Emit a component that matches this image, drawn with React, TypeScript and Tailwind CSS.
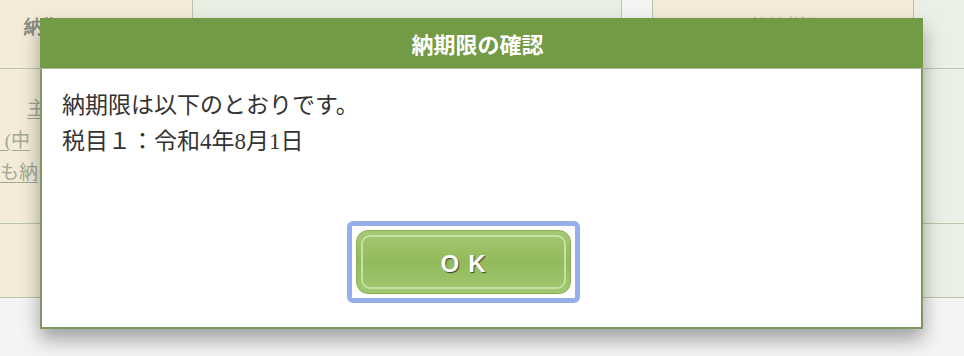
const serifJa = { fontFamily: '"Liberation Serif", "Noto Sans CJK JP", serif' };

const BackgroundTable = () => {
  return (
    <div className="grid grid-cols-[192px_428px_30px_260px_1fr] grid-rows-[68px_154px_73px] gap-px bg-[#b9c4aa] border-b border-[#b9c4aa]">
      {/* row 1 */}
      <div className="bg-[#f4ebd8] pl-[24px] pt-[12px] text-[19px] font-bold text-[#8c8c86]">
        納期
      </div>
      <div className="bg-[#e9efe3]" />
      <div className="bg-[#f4f5f2]" />
      <div className="bg-[#f4ebd8] flex items-start justify-center pt-[12px] text-[16px] font-bold text-[#c9c2b2]">
        納付税額
      </div>
      <div className="bg-[#eaf0e6]" />

      {/* row 2 */}
      <div
        className="bg-[#f4ebd8] flex flex-col items-start pt-[24px] text-[19px] leading-[32px] text-[#a3a994]"
        style={serifJa}
      >
        <span className="ml-[27px] underline decoration-[#a3a994] underline-offset-[3px]">主</span>
        <span className="underline decoration-[#a3a994] underline-offset-[3px]">&nbsp;(中</span>
        <span className="underline decoration-[#a3a994] underline-offset-[3px]">も納</span>
      </div>
      <div className="bg-[#e9efe3]" />
      <div className="bg-[#f4f5f2]" />
      <div className="bg-[#f4ebd8]" />
      <div className="bg-[#eaf0e6]" />

      {/* row 3 */}
      <div className="bg-[#f4ebd8] flex items-center pl-[32px] text-[15px] text-[#b5b3a8]">
        〈
      </div>
      <div className="bg-[#e9efe3]" />
      <div className="bg-[#f4f5f2]" />
      <div className="bg-[#f4ebd8]" />
      <div className="bg-[#eaf0e6]" />
    </div>
  );
};

const OkButton = () => {
  return (
    <div className="rounded-[6px] border-[5px] border-[#94afe9] p-[4px] bg-white">
      <button
        type="button"
        className="block w-[215px] h-[64px] rounded-[12px] border border-[#89b054] bg-gradient-to-b from-[#a6c972] via-[#92ba5a] to-[#a2c871] p-[4px]"
      >
        <span className="flex h-full w-full items-center justify-center rounded-[9px] border-2 border-[#c7e0a3]">
          <span
            className="pl-[9px] pt-[4px] text-[24px] font-bold tracking-[9px] text-white [text-shadow:1px_1px_1px_#3b4630]"
            style={{ fontFamily: '"Liberation Sans", Arial, sans-serif' }}
          >
            OK
          </span>
        </span>
      </button>
    </div>
  );
};

export default function App() {
  return (
    <div className="relative h-[356px] w-full overflow-hidden bg-[#f4f4f4]">
      <BackgroundTable />

      {/* modal dialog */}
      <div className="absolute left-[40px] top-[18px] w-[883px] shadow-[0_10px_18px_rgba(0,0,0,0.35)]">
        <div
          className="flex h-[51px] items-center justify-center border-b border-[#a9b99a] bg-[#739a44] text-[22px] font-bold text-white"
          style={{ fontFamily: '"Noto Sans CJK JP", sans-serif' }}
        >
          <span className="pr-[8px]">納期限の確認</span>
        </div>
        <div className="border-x-2 border-b-2 border-[#7d9960] bg-white pt-[19px] pb-[24px]">
          <div className="pl-[20px] text-[23px] leading-[36px] text-[#333333]" style={serifJa}>
            <p>納期限は以下のとおりです。</p>
            <p>税目１：令和4年8月1日</p>
          </div>
          <div className="mt-[61px] flex justify-center pr-[37px]">
            <OkButton />
          </div>
        </div>
      </div>
    </div>
  );
}
